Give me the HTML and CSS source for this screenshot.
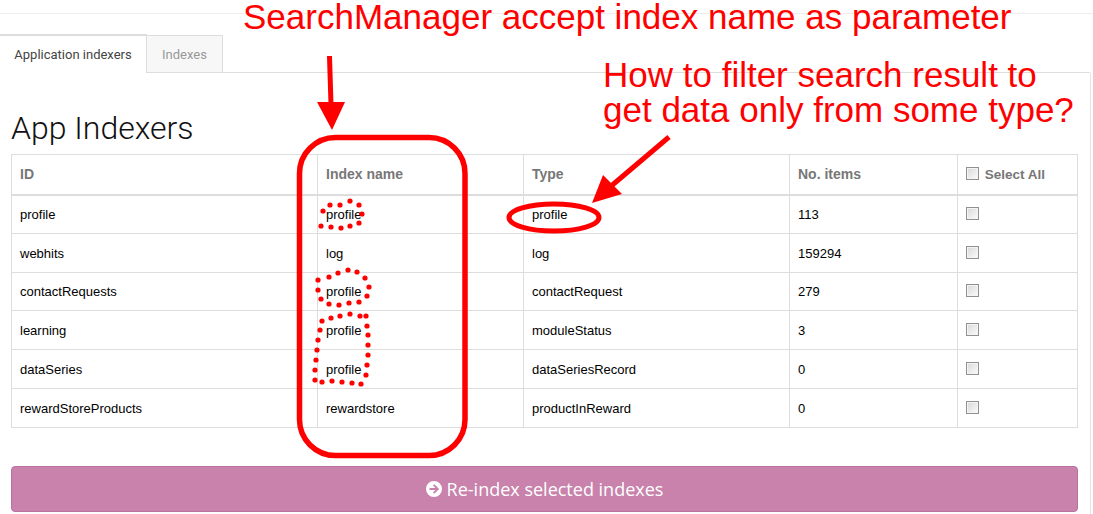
FILE: index.html
```html
<!DOCTYPE html>
<html lang="en">
<head>
  <meta charset="utf-8">
  <title>App Indexers</title>
  <link rel="stylesheet" href="styles.css">
</head>
<body>

  <div class="top-line"></div>

  <!-- Tabs -->
  <div class="tabs">
    <a class="tab active">Application indexers</a>
    <a class="tab">Indexes</a>
    <div class="tab-rest"></div>
  </div>

  <div class="panel">
    <h1>App Indexers</h1>

    <table class="indexers">
      <colgroup>
        <col class="col-id">
        <col class="col-name">
        <col class="col-type">
        <col class="col-items">
        <col class="col-select">
      </colgroup>
      <thead>
        <tr>
          <th>ID</th>
          <th>Index name</th>
          <th>Type</th>
          <th>No. items</th>
          <th class="select-all"><input type="checkbox" class="check"> Select All</th>
        </tr>
      </thead>
      <tbody>
        <tr><td>profile</td><td>profile</td><td>profile</td><td>113</td><td><input type="checkbox" class="check"></td></tr>
        <tr><td>webhits</td><td>log</td><td>log</td><td>159294</td><td><input type="checkbox" class="check"></td></tr>
        <tr class="short-row"><td>contactRequests</td><td>profile</td><td>contactRequest</td><td>279</td><td><input type="checkbox" class="check"></td></tr>
        <tr><td>learning</td><td>profile</td><td>moduleStatus</td><td>3</td><td><input type="checkbox" class="check"></td></tr>
        <tr><td>dataSeries</td><td>profile</td><td>dataSeriesRecord</td><td>0</td><td><input type="checkbox" class="check"></td></tr>
        <tr><td>rewardStoreProducts</td><td>rewardstore</td><td>productInReward</td><td>0</td><td><input type="checkbox" class="check"></td></tr>
      </tbody>
    </table>

    <button class="reindex">
      <svg class="reindex-icon" viewBox="0 0 16 16" width="16" height="16">
        <path fill="#fff" fill-rule="evenodd" d="M8 0a8 8 0 1 1 0 16A8 8 0 0 1 8 0zM8.300 3.200 7 4.500 9.400 6.900H3.500V9.100H9.400L7 11.500 8.300 12.800 13.100 8z"/>
      </svg>
      Re-index selected indexes
    </button>
  </div>

  <!-- Red notes drawn over the screenshot -->
  <div class="note note-top">SearchManager accept index name as parameter</div>
  <div class="note note-right">How to filter search result to<br>get data only from some type?</div>

  <svg class="marks" width="1093" height="514" viewBox="0 0 1093 514">
    <rect class="mark-line thick" x="299.500" y="137.500" width="165.500" height="318" rx="36"/>
    <ellipse class="mark-line" cx="554" cy="217.500" rx="45" ry="13.500"/>

    <path class="mark-line" d="M329.500 56 331 105"/>
    <path class="mark-fill" d="M317 102H345L332 130z"/>
    <path class="mark-line" d="M669 137 610 187"/>
    <path class="mark-fill" d="M592 203 603 175 622 194z"/>

    <g class="dots">
      <circle cx="330" cy="205" r="2.600"/><circle cx="340" cy="205" r="2.600"/><circle cx="350" cy="201" r="2.600"/>
      <circle cx="359" cy="205" r="2.600"/><circle cx="362" cy="214" r="2.600"/><circle cx="359" cy="223" r="2.600"/>
      <circle cx="350" cy="226" r="2.600"/><circle cx="341" cy="228" r="2.600"/><circle cx="331" cy="227" r="2.600"/>
      <circle cx="321" cy="226" r="2.600"/><circle cx="323" cy="211" r="2.600"/>

      <circle cx="318" cy="280" r="2.600"/><circle cx="329" cy="277" r="2.600"/><circle cx="338" cy="273" r="2.600"/>
      <circle cx="348" cy="270" r="2.600"/><circle cx="357" cy="272" r="2.600"/><circle cx="365" cy="278" r="2.600"/>
      <circle cx="369" cy="287" r="2.600"/><circle cx="367" cy="296" r="2.600"/><circle cx="359" cy="302" r="2.600"/>
      <circle cx="349" cy="303" r="2.600"/><circle cx="339" cy="305" r="2.600"/><circle cx="329" cy="304" r="2.600"/>
      <circle cx="321" cy="299" r="2.600"/><circle cx="318" cy="290" r="2.600"/>

      <circle cx="322" cy="321" r="2.600"/><circle cx="331" cy="318" r="2.600"/><circle cx="340" cy="316" r="2.600"/>
      <circle cx="350" cy="314" r="2.600"/><circle cx="360" cy="316" r="2.600"/><circle cx="366" cy="316" r="2.600"/>
      <circle cx="367" cy="326" r="2.600"/><circle cx="368" cy="335" r="2.600"/><circle cx="368" cy="345" r="2.600"/>
      <circle cx="368" cy="355" r="2.600"/><circle cx="367" cy="365" r="2.600"/><circle cx="366" cy="375" r="2.600"/>
      <circle cx="361" cy="384" r="2.600"/><circle cx="352" cy="383" r="2.600"/><circle cx="342" cy="382" r="2.600"/>
      <circle cx="332" cy="381" r="2.600"/><circle cx="322" cy="382" r="2.600"/><circle cx="315" cy="380" r="2.600"/>
      <circle cx="315" cy="370" r="2.600"/><circle cx="316" cy="360" r="2.600"/><circle cx="317" cy="350" r="2.600"/>
      <circle cx="318" cy="340" r="2.600"/><circle cx="320" cy="330" r="2.600"/>
    </g>
  </svg>

</body>
</html>
```

FILE: styles.css
```css
* {
  box-sizing: border-box;
}

body {
  margin: 0;
  height: 514px;
  overflow: hidden;
  background: #fff;
  color: #000;
  font-family: "Liberation Sans", sans-serif;
  font-size: 13px;
}

.top-line {
  height: 14px;
  border-bottom: 1px solid #eee;
}

/* Tabs */
.tabs {
  display: flex;
  align-items: flex-end;
  height: 59px;
  padding-top: 20px;
}

.tab {
  height: 38px;
  padding-top: 11px;
  font-family: Roboto, sans-serif;
  font-size: 13px;
  text-align: center;
  border: 1px solid #ddd;
  border-left: 0;
}

.tab.active {
  width: 147px;
  height: 39px;
  color: #444;
  border-top-width: 2px;
  border-bottom: 0;
}

.tab:not(.active) {
  width: 76px;
  color: #999;
  background: #f7f7f7;
}

.tab-rest {
  flex: 1;
  margin-right: 3px;
  border-bottom: 1px solid #ddd;
}

.panel {
  height: 441px;
  margin-right: 2px;
  padding: 0 11px;
  border-right: 1px solid #e4e4e4;
}

h1 {
  margin: 0;
  padding-top: 33px;
  height: 81px;
  font-family: Roboto, sans-serif;
  font-size: 32px;
  line-height: 44px;
  font-weight: 300;
  color: #111;
}

/* Table */
.indexers {
  width: 1066px;
  table-layout: fixed;
  border-collapse: collapse;
}

.col-id { width: 306px; }
.col-name { width: 206px; }
.col-type { width: 266px; }
.col-items { width: 168px; }
.col-select { width: 120px; }

.indexers th,
.indexers td {
  padding: 0 8px;
  border: 1px solid #ddd;
  text-align: left;
}

.indexers th {
  height: 40px;
  font-size: 14px;
  font-weight: 700;
  color: #777;
  border-bottom-width: 2px;
}

.indexers td {
  height: 39px;
}

.indexers .short-row td {
  height: 38px;
}

.indexers .select-all {
  font-size: 13.500px;
}

.check {
  appearance: none;
  display: inline-block;
  width: 13px;
  height: 13px;
  margin: 0 2px 0 0;
  vertical-align: -1px;
  border: 1px solid #919191;
  background: linear-gradient(135deg, #d8d8d8, #fcfcfc);
  box-shadow: inset 0 0 0 1px #f4f4f4;
}

/* Button */
.reindex {
  display: flex;
  align-items: center;
  justify-content: center;
  gap: 5px;
  width: 1067px;
  height: 46px;
  margin-top: 38px;
  padding: 0;
  font-family: "Open Sans", sans-serif;
  font-size: 18px;
  color: #fff;
  background: #c882ab;
  border: 1px solid #b872a0;
  border-radius: 4px;
}

/* Red notes */
.note {
  position: absolute;
  color: #f00;
  font-size: 35px;
  line-height: 35px;
  white-space: nowrap;
}

.note-top {
  left: 243px;
  top: 0;
  line-height: 33px;
}

.note-right {
  left: 603px;
  top: 57px;
}

.marks {
  position: absolute;
  left: 0;
  top: 0;
}

.mark-line {
  fill: none;
  stroke: #f00;
  stroke-width: 5;
}

.mark-line.thick {
  stroke-width: 5.500;
}

.mark-fill,
.dots {
  fill: #f00;
}
```
